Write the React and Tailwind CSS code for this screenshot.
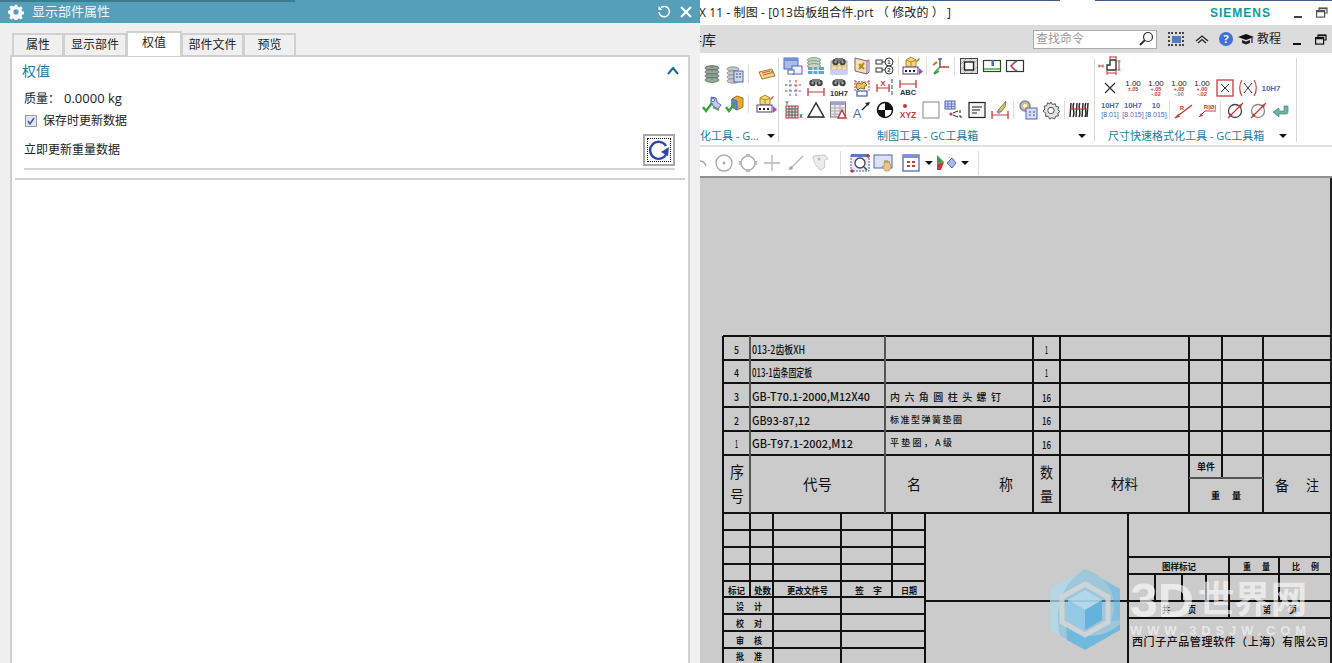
import React from "react";

const Svg = ({ children, w = 20, h = 20 }) => (
  <svg width={w} height={h} viewBox={`0 0 ${w} ${h}`} fill="none" className="block shrink-0">{children}</svg>
);
const MiniText = ({ x, y, s = 7, c = "#333", b = true, children, a = "middle" }) => (
  <text x={x} y={y} fontSize={s} fill={c} fontWeight={b ? 700 : 400} textAnchor={a} fontFamily="'Liberation Sans', sans-serif">{children}</text>
);
const BL = "#4c68b8", RD = "#c23b3b", GR = "#5a5a5a", GN = "#3ea040";

const Stack = () => <Svg>{[4, 8, 12, 16].map(y => <ellipse key={y} cx="10" cy={y} rx="7" ry="2.4" fill={y % 8 === 0 ? "#8fae98" : "#9a9a9a"} stroke="#666" strokeWidth=".8" />)}<path d="M10 2v16" stroke="#3a6" strokeDasharray="2 2" /></Svg>;
const StackDoc = () => <Svg>{[5, 9, 13, 17].map(y => <ellipse key={y} cx="8" cy={y} rx="6" ry="2.2" fill="#c5c5c5" stroke="#888" strokeWidth=".8" />)}<rect x="9" y="7" width="9" height="11" fill="#cdd5f0" stroke={BL} /><path d="M11 10h2m1 0h2m-5 3h2m1 0h2" stroke="#555" /></Svg>;
const Tag = () => <Svg><path d="M2 8l13-3 3 7-13 3z" fill="#f3d68a" stroke="#a97a2a" /><path d="M5 9l8-2M6 11l8-2" stroke={RD} strokeWidth=".8" /><circle cx="15" cy="8" r="1" fill="#fff" stroke="#777" /></Svg>;
const Check = () => <path d="M1 13l3 4 6-8" stroke={GN} strokeWidth="2.4" />;
const WrenchCheck = () => <Svg><path d="M9 3l5 1 1 4 4 3-3 4-5-3-2-4z" fill="#c9c7ef" stroke={BL} /><circle cx="11" cy="6" r="1.6" fill="#fff" stroke={BL} /><path d="M11 13l6 3" stroke="#7a9a6a" strokeWidth="2" /><Check /></Svg>;
const CubeCheck = () => <Svg><path d="M7 5l5-3 6 2v9l-6 3-5-3z" fill="#e9a92f" stroke="#a9721a" /><path d="M7 5l5 2v9l-5-3z" fill="#5f85d8" stroke={BL} /><Check /></Svg>;
const CubeForm = () => <Svg w={22}><path d="M4 4l5-3 5 3v6l-5 2-5-2z" fill="#f4d678" stroke="#b08a2a" /><path d="M4 4l5 2 5-2M9 6v6" stroke="#b08a2a" /><path d="M14 5l3-3 1 1-3 3z" fill="#d4603a" /><rect x="1" y="11" width="15" height="7" fill="#fff" stroke="#533a8a" /><path d="M3 15h2m2 0h2m2 0h2" stroke="#222" strokeWidth="2" /><path d="M17 12l4 3.5-4 3.5z" fill="#b146c2" /></Svg>;
const TwoRects = () => <Svg><rect x="1" y="2" width="14" height="11" fill="#a9bde8" stroke={BL} /><rect x="1" y="2" width="14" height="3" fill="#6f8fd8" /><rect x="9" y="10" width="10" height="8" fill="#eef1fb" stroke={BL} /><rect x="5" y="14" width="6" height="4" fill="#fff" stroke={BL} /></Svg>;
const LayerGrid = () => <Svg>{[4, 7, 10].map(y => <ellipse key={y} cx="8" cy={y} rx="6.5" ry="2.4" fill="#c5d8c5" stroke="#6a8a6a" strokeWidth=".8" />)}<rect x="2" y="11" width="16" height="7" fill="#56a8d8" /><path d="M2 14.5h16M7 11v7M12 11v7" stroke="#fff" /></Svg>;
const Binoc = ({ y = 3 }) => <g><circle cx="6.5" cy={y + 3} r="3.2" fill="#444" /><circle cx="13.5" cy={y + 3} r="3.2" fill="#444" /><rect x="6" y={y - 1} width="8" height="3" fill="#7a7a7a" /><circle cx="6.5" cy={y + 3} r="1.2" fill="#aaa" /><circle cx="13.5" cy={y + 3} r="1.2" fill="#aaa" /></g>;
const BinocTable = () => <Svg><rect x="2" y="5" width="16" height="13" fill="#f3e2a8" stroke="#aaa" /><path d="M2 10h16M2 14h16M8 5v13M13 5v13" stroke="#c9b67a" /><rect x="2" y="14" width="16" height="4" fill="#c8d0ee" /><Binoc /></Svg>;
const BookPencil = () => <Svg><path d="M3 2l12 3v13l-12-3z" fill="#f3e2a8" stroke="#7a5aa8" /><path d="M7 8l5 5M12 7l-5 6" stroke="#b8862a" strokeWidth="2" /><path d="M15 5l2-1v12l-2 2" stroke="#7a5aa8" /></Svg>;
const List12 = () => <Svg><rect x="1" y="4" width="6" height="4" stroke="#333" /><rect x="1" y="12" width="6" height="4" stroke="#333" /><path d="M7 6h4M7 14h4" stroke="#333" /><circle cx="14" cy="6" r="4" fill="#fff" stroke="#333" /><circle cx="14" cy="14" r="4" fill="#fff" stroke="#333" /><MiniText x={14} y={8} s={6}>1</MiniText><MiniText x={14} y={16} s={6}>2</MiniText></Svg>;
const Axes = () => <Svg><path d="M9 11V2" stroke={GR} strokeWidth="1.5" /><path d="M9 11h9" stroke={RD} strokeWidth="1.5" /><path d="M9 11l-6 6" stroke={GN} strokeWidth="1.5" /><path d="M2 9l4-3" stroke="#d66a2a" strokeWidth="2" /><path d="M3 18l5-3" stroke={GN} strokeWidth="2" /><path d="M7 3h4" stroke={BL} strokeWidth="1.5" /></Svg>;
const SquareHatch = () => <Svg><rect x="1.5" y="2.5" width="17" height="15" fill="#ddd" stroke="#444" /><path d="M2 8l5-5M2 14l11-11M5 17l13-13M12 17l6-6" stroke="#999" strokeWidth=".8" /><rect x="5.5" y="6" width="9" height="8" fill="#fff" stroke="#222" strokeWidth="1.4" /></Svg>;
const RectGreen = () => <Svg><rect x="1.5" y="4.5" width="17" height="11" fill="#fff" stroke="#2a4a2a" strokeWidth="1.2" /><path d="M2 13h16" stroke={GN} strokeWidth="1.4" /><rect x="9.5" y="4" width="2.4" height="6" fill={BL} /></Svg>;
const RectRed = () => <Svg><rect x="1.5" y="4.5" width="17" height="11" fill="#fff" stroke="#333" strokeWidth="1.2" /><path d="M11 5L6 10l5 5" stroke={RD} strokeWidth="1.6" /><path d="M11 5l1 1M11 15l1-1" stroke={BL} strokeWidth="1.4" /></Svg>;
const DashGrid = () => <Svg><path d="M2 7h16" stroke={RD} strokeDasharray="2.5 2" /><path d="M2 13h16" stroke={BL} strokeDasharray="2.5 2" /><path d="M7 2v16" stroke={BL} strokeDasharray="2.5 2" /><path d="M13 2v16" stroke={RD} strokeDasharray="2.5 2" /></Svg>;
const DimLine = ({ y = 15, x1 = 2, x2 = 18 }) => <g stroke={RD}><path d={`M${x1} ${y}H${x2}`} /><path d={`M${x1} ${y - 4}v8M${x2} ${y - 4}v8`} strokeWidth="1.3" /></g>;
const BinocDim = () => <Svg><Binoc y={2} /><DimLine y={14} /></Svg>;
const Binoc10 = () => <Svg><Binoc y={2} /><MiniText x={10} y={18} s={7.5}>10H7</MiniText></Svg>;
const WrenchGrid = () => <Svg><path d="M3 2v11M17 2v11M3 4h14" stroke={RD} strokeDasharray="2 1" /><path d="M5 5l5 1 2-2 3 3-3 2 1 2-5-1-2 2-2-3z" fill="#e8c25a" stroke="#8a6a2a" /><rect x="5" y="13" width="10" height="5" fill="#fff" stroke={BL} strokeWidth="1.3" /></Svg>;
const XDim = () => <Svg><DimLine y={10} x1={2} x2={14} /><MiniText x={8} y={8} s={8} c={RD}>X</MiniText><path d="M17 1v18" stroke="#444" strokeDasharray="4 2" /></Svg>;
const AbcDim = () => <Svg><DimLine y={6} x1={2} x2={18} /><MiniText x={10} y={17} s={7.5}>ABC</MiniText></Svg>;
const TableY = () => <Svg><rect x="3" y="6" width="12" height="12" fill="#ddd" stroke={RD} /><path d="M3 9h12M3 12h12M3 15h12M6 6v12M9 6v12M12 6v12" stroke="#444" strokeWidth=".8" /><MiniText x={4} y={5} s={5}>Y</MiniText><MiniText x={18} y={18} s={5}>X</MiniText></Svg>;
const Triangle = () => <Svg><path d="M10 3L2 17h16z" stroke="#222" strokeWidth="1.4" /></Svg>;
const TableTri = () => <Svg><rect x="1.5" y="2" width="15" height="15" fill="#ececec" stroke="#777" /><rect x="1.5" y="2" width="15" height="3" fill="#a0a0d8" /><path d="M1.5 8h15M1.5 11h15M1.5 14h15M6 2v15M11 2v15" stroke="#aaa" /><path d="M13 10l-4 8h8z" fill="#fff" stroke={RD} strokeWidth="1.4" /></Svg>;
const AArrow = () => <Svg><MiniText x={5} y={18} s={13} c={BL} b={false}>A</MiniText><path d="M10 10l7-7" stroke="#222" strokeWidth="1.2" /><path d="M18 2l-5 1 3 3z" fill="#222" /></Svg>;
const HalfCircle = () => <Svg><circle cx="10" cy="10" r="7.5" fill="#fff" stroke="#111" strokeWidth="1.5" /><path d="M10 10V2.5a7.5 7.5 0 0 1 7.5 7.5zM10 10v7.5A7.5 7.5 0 0 1 2.5 10z" fill="#111" /></Svg>;
const Xyz = () => <Svg><circle cx="7" cy="6" r="2" fill={RD} /><MiniText x={10} y={18} s={8.5} c={RD}>XYZ</MiniText></Svg>;
const Blank = () => <Svg><rect x="2" y="2" width="16" height="16" fill="#fff" stroke="#888" /></Svg>;
const TablePoint = () => <Svg><rect x="1" y="1" width="10" height="8" fill="#cdd5f0" stroke={BL} /><path d="M1 4h10M1 6.5h10M4 1v8M7.5 1v8" stroke={BL} strokeWidth=".7" /><circle cx="7" cy="14" r="1.6" fill={RD} /><path d="M9 13l5-2M9 15l5 2" stroke="#222" /><path d="M16 10v3M15 16h2v2" stroke="#222" /></Svg>;
const NoteDoc = () => <Svg><rect x="2" y="2.5" width="16" height="15" fill="#f3f3f3" stroke="#222" strokeWidth="1.2" /><path d="M5 7h10M5 10h8M5 13h5" stroke="#222" strokeWidth="1.2" /></Svg>;
const BrushDim = () => <Svg><path d="M16 1l-5 6-3 3 3 2 4-5z" fill="#d9c37a" stroke="#8a7a4a" /><path d="M8 10l3 2-2 2-3-2z" fill="#8a8ad0" /><DimLine y={15} /></Svg>;
const GearTable = () => <Svg><circle cx="7" cy="6" r="5" fill="#e8b86a" stroke="#6a8ac8" strokeWidth="1.5" /><circle cx="7" cy="6" r="2" fill="#fff" /><rect x="8" y="8" width="11" height="11" fill="#d5ddf5" stroke={BL} /><path d="M11 12h2m2 0h2m-6 3h2m2 0h2" stroke="#555" /></Svg>;
const Gear = () => <Svg><path d="M10 2l1.5 2.5 2.8-.8.6 2.8 2.8.6-.8 2.8L19 11.5l-2.2 1.6.6 2.8-2.8.4-1 2.7-2.6-1.3-2.4 1.4-1.2-2.6-2.9-.2.4-2.9L2 11l2-2-1-2.7 2.8-.8L6.5 2.7 9 4z" fill="#e4e4e4" stroke="#555" /><circle cx="10" cy="10.5" r="3.2" fill="#fff" stroke="#555" /></Svg>;
const Hatch = () => <Svg><path d="M2 3l-1 14M8 3L7 17M14 3l-1 14M19 3l-1 14" stroke="#222" strokeWidth="1.4" /><path d="M5 3C2 7 7 12 4 17M11 3C8 7 13 12 10 17M17 3c-3 4 2 9-1 14" stroke="#222" strokeWidth="1.4" /><path d="M1 9h18" stroke={RD} strokeWidth="1.2" /></Svg>;
const StepDim = () => <Svg w={24}><path d="M9 14V9h3V4h6v10z" stroke="#333" strokeWidth="1.4" /><g stroke={RD}><path d="M12 1h6M12 0v3M18 0v3" /><path d="M21 5v9M19.5 5h3M19.5 14h3" /><path d="M1 10h4M1 8.5v3M5 8.5v3" /><path d="M9 17h9M9 15v4M18 15v4" /></g></Svg>;
const XMark = () => <Svg><path d="M5 5l10 10M15 5L5 15" stroke="#333" strokeWidth="1.3" /></Svg>;
const Tol = ({ a, b, grey }) => <Svg><MiniText x={10} y={8} s={8} b={false} c="#222">1.00</MiniText><MiniText x={10} y={13} s={5.5} c={RD}>{a}</MiniText>{b && <MiniText x={10} y={18} s={5.5} c={grey ? "#888" : RD}>{b}</MiniText>}</Svg>;
const XBox = () => <Svg><rect x="2" y="2" width="16" height="16" stroke={RD} strokeWidth="1.3" /><path d="M6 6l8 8M14 6l-8 8" stroke="#333" /></Svg>;
const XParen = () => <Svg><path d="M4 2C1 6 1 14 4 18M16 2c3 4 3 12 0 16" stroke={RD} strokeWidth="1.2" /><path d="M6 5l8 10M14 5L6 15" stroke="#333" /></Svg>;
const Tol10 = ({ l1, l2, n = "10H7" }) => <Svg w={22}><MiniText x={11} y={8} s={7.5} c={BL}>{n}</MiniText><MiniText x={11} y={17} s={7} c={BL} b={false}>{`[${l1}${l2}]`}</MiniText></Svg>;
const Blue10 = () => <Svg><MiniText x={10} y={13} s={8} c={BL}>10H7</MiniText></Svg>;
const RDiag = () => <Svg><path d="M1 18L18 5" stroke={RD} strokeWidth="1.3" /><path d="M1 18l5-1-2-3z" fill={RD} /><MiniText x={8} y={10} s={6} c={RD}>R</MiniText></Svg>;
const RBox = () => <Svg><path d="M2 17l6-6h11" stroke={RD} /><path d="M2 17l4-1-2-3z" fill={RD} /><MiniText x={13} y={9} s={6} c={RD}>R|Ø|</MiniText></Svg>;
const CircDiag = ({ c = "#444" }) => <Svg><circle cx="10" cy="11" r="6.5" fill="#fff" stroke={c} strokeWidth="1.3" /><path d="M3 18L18 3" stroke={RD} strokeWidth="1.2" /><path d="M4 17l1-4 3 3zM17 4l-4 1 3 3z" fill={RD} /></Svg>;
const TealArrow = () => <Svg><path d="M17 6v6a2 2 0 0 1-2 2H8v3l-6-5 6-4v3h5V6z" fill="#6fb0a8" stroke="#3f8f8a" strokeWidth=".7" /></Svg>;
const CircleDot = () => <Svg w={22} h={22}><circle cx="11" cy="11" r="8" stroke="#aaa" strokeWidth="1.4" /><circle cx="11" cy="11" r="1.5" fill="#aaa" /></Svg>;
const CircleHandles = () => <Svg w={22} h={22}><circle cx="11" cy="11" r="7" stroke="#aaa" strokeWidth="1.3" /><path d="M9 2h4v3H9zM9 17h4v3H9zM2 9h3v4H2zM17 9h3v4h-3z" fill="#bbb" /></Svg>;
const Plus = () => <Svg><path d="M10 2v16M2 10h16" stroke="#b5b5b5" strokeWidth="1.3" /></Svg>;
const LineGrey = () => <Svg><path d="M3 17L17 3" stroke="#b5b5b5" strokeWidth="1.2" /><circle cx="5" cy="15" r="1.8" fill="#aaa" /></Svg>;
const ShapeGrey = () => <Svg><path d="M3 3l12-1 3 4c-4 0-4 4-3 8l-4 3c-4-2-8-8-8-14z" fill="#ececec" stroke="#c8c8c8" /><circle cx="9" cy="6" r="1.5" fill="#bbb" /></Svg>;
const ZoomFit = () => <Svg w={22} h={22}><rect x="2" y="3" width="18" height="16" fill="#e8ecf8" stroke={BL} strokeDasharray="2 1" /><rect x="2" y="2" width="18" height="3" fill="#5a76c0" /><circle cx="11" cy="11" r="5" fill="#fff" stroke="#444" strokeWidth="1.3" /><path d="M15 15l3 3" stroke="#444" strokeWidth="1.5" /><circle cx="19" cy="4" r="1.8" fill={RD} /><circle cx="3" cy="19" r="1.8" fill={RD} /></Svg>;
const HandPan = () => <Svg w={22} h={22}><rect x="1" y="3" width="18" height="13" fill="#dde2f3" stroke={BL} /><path d="M11 11l1-3 1 3 1-3 1 3 1-2 1 3 1 1v3l-2 3h-4l-3-5 2 1z" fill="#e6c68a" stroke="#a08040" strokeWidth=".6" /></Svg>;
const SnapView = () => <Svg w={22} h={22}><rect x="3" y="3" width="16" height="16" fill="#fff" stroke={BL} strokeWidth="1.3" /><rect x="3" y="3" width="16" height="3" fill="#7a90d8" /><path d="M7 9h3v2H7zM12 9h3v2h-3zM7 13h3v2H7zM12 13h3v2h-3z" fill={RD} /></Svg>;
const PlayDiamond = () => <Svg w={22} h={22}><path d="M12 11l5-5 4 5-4 5z" fill="#a9b8e6" stroke={BL} /><path d="M2 3l7 7-7 2z" fill="#3ea050" /><path d="M2 12l7-2-3 8-4 0z" fill="#c8383f" /></Svg>;
const Arrow = () => <svg width="8" height="4" viewBox="0 0 8 4" className="block shrink-0"><path d="M0 0h8L4 4z" fill="#111" /></svg>;

const Cell = ({ children }) => <div className="w-[23px] h-[22px] flex items-center justify-center shrink-0">{children}</div>;
const Sep = () => <div className="w-px h-[18px] bg-[#dcdcdc] mx-[2px] shrink-0" />;
const Row = ({ children }) => <div className="flex items-center h-[22px]">{children}</div>;
const VLine = () => <div className="w-px h-[84px] bg-[#d8d8d8] mt-[5px] shrink-0" />;
const GroupLabel = ({ children, right }) => (
  <div className="absolute bottom-0 left-0 right-0 h-[18px] flex items-center text-[11px] text-[#1b7aa3] whitespace-nowrap overflow-hidden">
    {children}
    <div className={right}><Arrow /></div>
  </div>
);

const T = ({ x, y, w, s = 11, children, weight = 500, adj = "spacingAndGlyphs" }) => (
  <text x={x} y={y} fontSize={s} fontWeight={weight} fill="#111" dominantBaseline="central" textLength={w} lengthAdjust={adj} fontFamily="'Noto Sans CJK SC', 'Liberation Sans', sans-serif">{children}</text>
);
const H = ({ y, a, b, g }) => <line x1={a} x2={b} y1={y} y2={y} stroke={g ? "#555" : "#111"} strokeWidth="2" />;
const V = ({ x, a, b, g, t = 2 }) => <line x1={x} x2={x} y1={a} y2={b} stroke={g ? "#555" : "#111"} strokeWidth={t} />;

const Drawing = () => (
  <svg viewBox="700 178 632 485" width="632" height="485" className="block" shapeRendering="crispEdges">
    <line x1="1331" x2="1331" y1="178" y2="663" stroke="#222" strokeWidth="2" />
    {[336, 360, 383, 407, 431, 455].map(y => <H key={y} y={y} a={723} b={1331} />)}
    <H y={513} a={723} b={1331} />
    {[723, 750, 885, 1033, 1060, 1189, 1263].map(x => <V key={x} x={x} a={336} b={513} g={x === 750 || x === 885} />)}
    <V x={1222} a={336} b={478} />
    <H y={478} a={1189} b={1263} g />

    {[530, 547, 564, 581, 597, 614, 631, 648].map(y => <H key={y} y={y} a={723} b={925} />)}
    <V x={723} a={513} b={663} />
    <V x={750} a={513} b={597} />
    <V x={773} a={513} b={663} />
    <V x={841} a={513} b={663} />
    <V x={892} a={513} b={597} />
    <V x={925} a={513} b={663} />
    <H y={601} a={925} b={1331} />
    <V x={1128} a={513} b={663} />
    <H y={557} a={1128} b={1331} />
    <H y={574} a={1128} b={1331} />
    <H y={618} a={1128} b={1331} />
    <V x={1229} a={557} b={618} />
    <V x={1279} a={557} b={601} />
    <V x={1155} a={574} b={601} />
    <V x={1182} a={574} b={601} />
    <V x={1206} a={574} b={601} />

    <g shapeRendering="auto">
      <T x={734} y={349} w={5}>5</T>
      <T x={734} y={372} w={5}>4</T>
      <T x={734} y={396} w={5}>3</T>
      <T x={734} y={420} w={5}>2</T>
      <T x={735} y={443} w={3}>1</T>
      <T x={752} y={349} w={53}>013-2齿板XH</T>
      <T x={752} y={372} w={60}>013-1齿条固定板</T>
      <T x={752} y={396} w={118}>GB-T70.1-2000,M12X40</T>
      <T x={752} y={420} w={58}>GB93-87,12</T>
      <T x={752} y={443} w={101}>GB-T97.1-2002,M12</T>
      <T x={890} y={396} w={111} s={10} adj="spacing">内六角圆柱头螺钉</T>
      <T x={890} y={419} w={72} s={9} adj="spacing">标准型弹簧垫圈</T>
      <T x={890} y={442} w={62} s={9} adj="spacing">平垫圈，A级</T>
      <T x={1045} y={349} w={3}>1</T>
      <T x={1045} y={372} w={3}>1</T>
      <T x={1042} y={397} w={9}>16</T>
      <T x={1042} y={420} w={9}>16</T>
      <T x={1042} y={444} w={9}>16</T>

      <T x={730} y={471} w={14} s={16} weight={400}>序</T>
      <T x={730} y={495} w={14} s={16} weight={400}>号</T>
      <T x={803} y={483} w={29} s={15} weight={400}>代号</T>
      <T x={907} y={483} w={14} s={15} weight={400}>名</T>
      <T x={999} y={483} w={14} s={15} weight={400}>称</T>
      <T x={1040} y={471} w={13} s={15} weight={400}>数</T>
      <T x={1040} y={495} w={13} s={15} weight={400}>量</T>
      <T x={1111} y={483} w={27} s={14} weight={400}>材料</T>
      <T x={1197} y={466} w={18} s={9} weight={700}>单件</T>
      <T x={1211} y={495} w={9} s={9} weight={700}>重</T>
      <T x={1232} y={495} w={9} s={9} weight={700}>量</T>
      <T x={1275} y={484} w={14} s={15} weight={400}>备</T>
      <T x={1306} y={484} w={13} s={15} weight={400}>注</T>

      <T x={728} y={590} w={17} s={9} weight={700}>标记</T>
      <T x={754} y={590} w={17} s={9} weight={700}>处数</T>
      <T x={787} y={590} w={41} s={9} weight={700}>更改文件号</T>
      <T x={855} y={590} w={9} s={9} weight={700}>签</T>
      <T x={873} y={590} w={9} s={9} weight={700}>字</T>
      <T x={901} y={590} w={16} s={9} weight={700}>日期</T>
      {[["设", "计", 606], ["校", "对", 623], ["审", "核", 640], ["批", "准", 656]].map(([a, b, y]) => (
        <g key={a}>
          <T x={736} y={y} w={8} s={9} weight={700}>{a}</T>
          <T x={754} y={y} w={8} s={9} weight={700}>{b}</T>
        </g>
      ))}
      <T x={1162} y={566} w={34} s={9} weight={700}>图样标记</T>
      <T x={1243} y={566} w={8} s={9} weight={700}>重</T>
      <T x={1262} y={566} w={8} s={9} weight={700}>量</T>
      <T x={1292} y={566} w={8} s={9} weight={700}>比</T>
      <T x={1311} y={566} w={8} s={9} weight={700}>例</T>
      <T x={1162} y={609} w={8} s={9} weight={700}>共</T>
      <T x={1188} y={609} w={8} s={9} weight={700}>页</T>
      <T x={1263} y={609} w={8} s={9} weight={700}>第</T>
      <T x={1289} y={609} w={8} s={9} weight={700}>页</T>
      <T x={1132} y={641} w={196} s={11} weight={500} adj="spacing">西门子产品管理软件（上海）有限公司</T>

      <g>
        <path d="M1085 569l35 20v41l-35 20-35-20v-41z" fill="#7cc4e8" fillOpacity=".55" />
        <path d="M1085 569l-35 20v41l10 6c-6-24 0-52 25-67z" fill="#d0e6f0" fillOpacity=".5" />
        <path d="M1085 569c24 8 35 30 26 52l9-1v-31z" fill="#5fb4e2" fillOpacity=".45" />
        <path d="M1066 622c12 18 36 18 54 2l0 6-35 20-18-10z" fill="#52aee0" fillOpacity=".6" />
        <path d="M1085 584l23 13v25l-23 13-23-13v-25z" fill="none" stroke="#d6d6d6" strokeOpacity=".85" strokeWidth="5" />
        <path d="M1085 590l17 10-17 10-17-10z" fill="#b8dcee" fillOpacity=".8" />
        <path d="M1068 600l17 10v20l-17-10z" fill="#90c9e8" fillOpacity=".85" />
        <path d="M1102 600l-17 10v20l17-10z" fill="#5eb0dd" fillOpacity=".9" />
      </g>
      <text x="1130" y="617" fontSize="48" fontWeight="700" fill="#fff" fillOpacity=".62" textLength="64" lengthAdjust="spacingAndGlyphs" fontFamily="'Liberation Sans', sans-serif">3D</text>
      <text x="1198" y="613" fontSize="37" fontWeight="700" fill="#fff" fillOpacity=".62" textLength="109" lengthAdjust="spacingAndGlyphs" fontFamily="'Noto Sans CJK SC', sans-serif">世界网</text>
      <text x="1130" y="635" fontSize="13" fontWeight="700" fill="#fff" fillOpacity=".55" textLength="176" lengthAdjust="spacing" fontFamily="'Liberation Sans', sans-serif">WWW.3DSJW.COM</text>
    </g>
  </svg>
);

const Tab = ({ children, w }) => (
  <div className={`${w} h-[22px] bg-[#f0f0f0] border-2 border-b-0 border-[#d0d0d0] flex items-center justify-center text-[12px] text-[#222] -ml-[1px] mb-[1px]`}>{children}</div>
);

const Dialog = () => (
  <div className="w-[700px] h-[663px] shrink-0 flex flex-col bg-[#f0f0f0] z-10">
    <div className="h-[23px] bg-[#559fb9] relative flex items-center pl-[8px] shrink-0">
      <div className="absolute top-0 left-0 w-[295px] h-[2px] bg-[#3f7a90]" />
      <svg width="16" height="16" viewBox="0 0 24 24" className="block shrink-0" fill="#fff">
        <path fillRule="evenodd" d="M10 1h4l.6 3.2 2 .8 2.7-1.8 2.8 2.8-1.8 2.7.8 2 3.2.6v4l-3.2.6-.8 2 1.8 2.7-2.8 2.8-2.7-1.8-2 .8-.6 3.2h-4l-.6-3.2-2-.8-2.7 1.8-2.8-2.8 1.8-2.7-.8-2L0 14v-4l3.2-.6.8-2L2.2 4.700 5 1.900l2.700 1.800 2-.8zM12 8a4 4 0 1 0 0 8 4 4 0 0 0 0-8z" />
      </svg>
      <span className="ml-[8px] text-[13px] text-[#eaf6fa]">显示部件属性</span>
      <div className="ml-auto mr-[7px] flex items-center gap-[8px]">
        <svg width="14" height="14" viewBox="0 0 14 14" fill="none" className="block"><path d="M4 2.5A5.2 5.2 0 1 1 2 7" stroke="#fff" strokeWidth="1.5" /><path d="M1.500 1v4h4" fill="#fff" /></svg>
        <svg width="14" height="14" viewBox="0 0 14 14" className="block"><path d="M2 2l10 10M12 2L2 12" stroke="#fff" strokeWidth="2" /></svg>
      </div>
    </div>
    <div className="h-[33px] pl-[13px] flex items-end shrink-0 relative z-10 -mb-[1px]">
      <Tab w="w-[52px]">属性</Tab>
      <Tab w="w-[64px]">显示部件</Tab>
      <div className="w-[56px] h-[25px] bg-white border-2 border-b-0 border-[#d0d0d0] flex items-center justify-center text-[12px] text-[#222] -ml-[1px] pb-[3px]">权值</div>
      <Tab w="w-[63px]">部件文件</Tab>
      <Tab w="w-[53px]">预览</Tab>
    </div>
    <div className="ml-[10px] w-[680px] flex-1 bg-white border-2 border-b-0 border-[#cfcfcf] flex flex-col text-[12px] text-[#222]">
      <div className="h-[26px] pl-[10px] pr-[9px] flex items-center justify-between shrink-0">
        <span className="text-[14px] text-[#1f7a9f]">权值</span>
        <svg width="12" height="9" viewBox="0 0 12 9" fill="none" className="block"><path d="M1 8l5-6 5 6" stroke="#0f6e8e" strokeWidth="2" /></svg>
      </div>
      <div className="pl-[12px] h-[30px] mt-[1px] flex items-center shrink-0">质量：<span className="ml-[4px] text-[13px]">0.0000 kg</span></div>
      <div className="pl-[13px] h-[14px] flex items-center gap-[6px] shrink-0">
        <div className="w-[12px] h-[12px] bg-[#e2e6ee] border border-[#9a9a9a] flex items-center justify-center">
          <svg width="10" height="10" viewBox="0 0 10 10" fill="none" className="block"><path d="M2 5l2 3 4-6" stroke="#3f55a8" strokeWidth="1.5" /></svg>
        </div>
        <span>保存时更新数据</span>
      </div>
      <div className="pl-[12px] pr-[13px] mt-[6px] h-[32px] flex items-center justify-between shrink-0">
        <span>立即更新重量数据</span>
        <div className="w-[32px] h-[32px] border-2 border-[#a8a8a8] p-[2px]">
          <div className="w-full h-full border border-dotted border-[#111] flex items-center justify-center">
            <svg width="22" height="22" viewBox="0 0 22 22" fill="none" className="block"><path d="M18 7A8.5 8.5 0 1 0 19 13" stroke="#2f47ad" strokeWidth="2.4" /><path d="M21 8l-1 9-7-4z" fill="#2f47ad" /></svg>
          </div>
        </div>
      </div>
      <div className="ml-[12px] mr-[13px] mt-[2px] h-[2px] bg-[#d4d4d4] shrink-0" />
      <div className="ml-[3px] mr-[3px] mt-[8px] h-[2px] bg-[#d0d0d0] shrink-0" />
    </div>
  </div>
);

const Ribbon = () => (
  <div className="h-[94px] bg-white flex shrink-0 border-b-2 border-[#e0e0e0]">
    <div className="w-[78px] relative shrink-0 pt-[10px]">
      <Row><Cell><Stack /></Cell><Cell><StackDoc /></Cell><Sep /><div className="w-[4px]" /><Cell><Tag /></Cell></Row>
      <div className="h-[8px]" />
      <Row><Cell><WrenchCheck /></Cell><Cell><CubeCheck /></Cell><Sep /><div className="w-[4px]" /><Cell><CubeForm /></Cell></Row>
      <GroupLabel right="ml-[8px]">化工具 - G...</GroupLabel>
    </div>
    <VLine />
    <div className="w-[315px] relative shrink-0 pl-[2px] pt-[2px]">
      <Row><Cell><TwoRects /></Cell><Cell><LayerGrid /></Cell><Cell><BinocTable /></Cell><Cell><BookPencil /></Cell><Cell><List12 /></Cell><Sep /><Cell><CubeForm /></Cell><Sep /><Cell><Axes /></Cell><Sep /><Cell><SquareHatch /></Cell><Cell><RectGreen /></Cell><Cell><RectRed /></Cell></Row>
      <Row><Cell><DashGrid /></Cell><Cell><BinocDim /></Cell><Cell><Binoc10 /></Cell><Cell><WrenchGrid /></Cell><Cell><XDim /></Cell><Cell><AbcDim /></Cell></Row>
      <Row><Cell><TableY /></Cell><Cell><Triangle /></Cell><Cell><TableTri /></Cell><Cell><AArrow /></Cell><Cell><HalfCircle /></Cell><Cell><Xyz /></Cell><Cell><Blank /></Cell><Cell><TablePoint /></Cell><Cell><NoteDoc /></Cell><Cell><BrushDim /></Cell><Sep /><Cell><GearTable /></Cell><Cell><Gear /></Cell><Sep /><Cell><Hatch /></Cell></Row>
      <GroupLabel right="ml-[100px]"><span className="ml-[98px]">制图工具 - GC工具箱</span></GroupLabel>
    </div>
    <VLine />
    <div className="w-[201px] relative shrink-0 pl-[3px] pt-[2px]">
      <Row><Cell><StepDim /></Cell></Row>
      <Row><Cell><XMark /></Cell><Cell><Tol a="±.05" /></Cell><Cell><Tol a="+.05" b="-.02" /></Cell><Cell><Tol a="+.05" b="-.00" grey /></Cell><Cell><Tol a="+.00" b="-.02" /></Cell><Cell><XBox /></Cell><Cell><XParen /></Cell><Cell><Blue10 /></Cell></Row>
      <Row><Cell><Tol10 l1="8" l2=".01" /></Cell><Cell><Tol10 l1="8" l2=".015" /></Cell><Cell><Tol10 n="10" l1="8" l2=".015" /></Cell><Sep /><Cell><RDiag /></Cell><Cell><RBox /></Cell><Sep /><Cell><CircDiag /></Cell><Cell><CircDiag c="#888" /></Cell><Cell><TealArrow /></Cell></Row>
      <GroupLabel right="ml-[15px]"><span className="ml-[13px]">尺寸快速格式化工具 - GC工具箱</span></GroupLabel>
    </div>
    <VLine />
  </div>
);

const TCell = ({ children }) => <div className="w-[24px] h-[24px] flex items-center justify-center shrink-0">{children}</div>;

const Toolbar = () => (
  <div className="h-[31px] bg-white flex items-center -ml-[12px] shrink-0 border-b-2 border-[#8f8f8f] pt-[3px]">
    <TCell><Svg><path d="M10 8c3 0 5 2 6 5" stroke="#aaa" strokeWidth="1.4" /></Svg></TCell>
    <TCell><CircleDot /></TCell>
    <TCell><CircleHandles /></TCell>
    <TCell><Plus /></TCell>
    <TCell><LineGrey /></TCell>
    <TCell><ShapeGrey /></TCell>
    <div className="w-px h-[24px] bg-[#dcdcdc] ml-[8px] mr-[7px] shrink-0" />
    <TCell><ZoomFit /></TCell>
    <TCell><HandPan /></TCell>
    <div className="w-[3px]" />
    <TCell><SnapView /></TCell>
    <div className="w-[12px] flex justify-center"><Arrow /></div>
    <div className="w-[22px] flex justify-center"><PlayDiamond /></div>
    <div className="w-[2px]" />
    <div className="w-[12px] flex justify-center"><Arrow /></div>
    <div className="w-px h-[24px] bg-[#dcdcdc] ml-[7px]" />
  </div>
);

const Restore = ({ c = "#444" }) => <svg width="12" height="11" viewBox="0 0 12 11" fill="none" className="block"><path d="M3 3V1h8v5H9" stroke={c} strokeWidth="1.2" /><rect x=".6" y="3.6" width="8" height="6.5" stroke={c} strokeWidth="1.2" /><path d="M.6 4.5h8M3 1.5h8" stroke={c} strokeWidth="1.5" /></svg>;

const MainWindow = () => (
  <div className="w-[632px] h-[663px] shrink-0 overflow-hidden flex flex-col bg-[#cbcbcb]">
    <div className="h-[25px] bg-white relative flex items-center shrink-0">
      <div className="absolute top-0 left-[128px] w-[232px] h-px bg-[#3d5c86]" />
      <div className="absolute top-0 left-[395px] right-0 h-px bg-[#3d5c86]" />
      <span className="-ml-[1px] text-[12px] tracking-[0.1px] text-[#222] whitespace-nowrap">X 11 - 制图 - [013齿板组合件.prt （ 修改的 ） ]</span>
      <span className="ml-auto mr-[23px] text-[12px] font-bold tracking-[1px] text-[#0a9c9c]" style={{ fontFamily: "'Liberation Sans',sans-serif" }}>SIEMENS</span>
      <div className="w-[8px] h-[2px] bg-[#444] mt-[9px] mr-[14px]" />
      <div className="mr-[4px]"><Restore c="#555" /></div>
    </div>
    <div className="h-[28px] bg-[#dcdcdc] flex items-center shrink-0">
      <div className="w-[333px] overflow-hidden shrink-0"><span className="block -ml-[12px] text-[14px] text-[#222] whitespace-nowrap">件库</span></div>
      <div className="w-[124px] h-[19px] bg-white border border-[#aaaaaa] flex items-center justify-between pl-[2px] pr-[2px] text-[12px] text-[#9a9a9a] shrink-0">
        查找命令
        <svg width="16" height="16" viewBox="0 0 16 16" fill="none" className="block"><circle cx="10" cy="6" r="4.5" fill="#f5f5f5" stroke="#333" strokeWidth="1.2" /><path d="M7 9l-5 5" stroke="#333" strokeWidth="2" /></svg>
      </div>
      <div className="ml-[11px] w-[16px] h-[14px] border-2 border-dotted border-[#444] flex items-center justify-center shrink-0"><div className="w-[9px] h-[7px] bg-[#5a76c0]" /></div>
      <svg width="14" height="10" viewBox="0 0 14 10" fill="none" className="block ml-[11px] shrink-0"><path d="M1 7l6-5 6 5M3 9l4-3.5L11 9" stroke="#222" strokeWidth="1.3" /></svg>
      <div className="ml-[10px] w-[14px] h-[14px] rounded-full bg-[#3f6fd8] text-white text-[11px] font-bold flex items-center justify-center shrink-0">?</div>
      <svg width="16" height="14" viewBox="0 0 16 14" className="block ml-[5px] shrink-0"><path d="M0 5l8-3 8 3-8 3z" fill="#111" /><path d="M4 8v3l4 1.5 4-1.5V8l-4 1.500z" fill="#222" /><path d="M14 6v5" stroke="#2a4ab0" strokeWidth="1.5" /></svg>
      <span className="ml-[3px] text-[12px] text-[#222] shrink-0">教程</span>
      <div className="w-[8px] h-[2px] bg-[#111] mt-[9px] ml-[12px] shrink-0" />
      <div className="ml-[14px] shrink-0"><Restore c="#111" /></div>
    </div>
    <Ribbon />
    <Toolbar />
    <Drawing />
  </div>
);

export default function App() {
  return (
    <div className="w-[1332px] h-[663px] flex overflow-hidden bg-white" style={{ fontFamily: "'Open Sans','Noto Sans CJK SC',sans-serif" }}>
      <Dialog />
      <MainWindow />
    </div>
  );
}
